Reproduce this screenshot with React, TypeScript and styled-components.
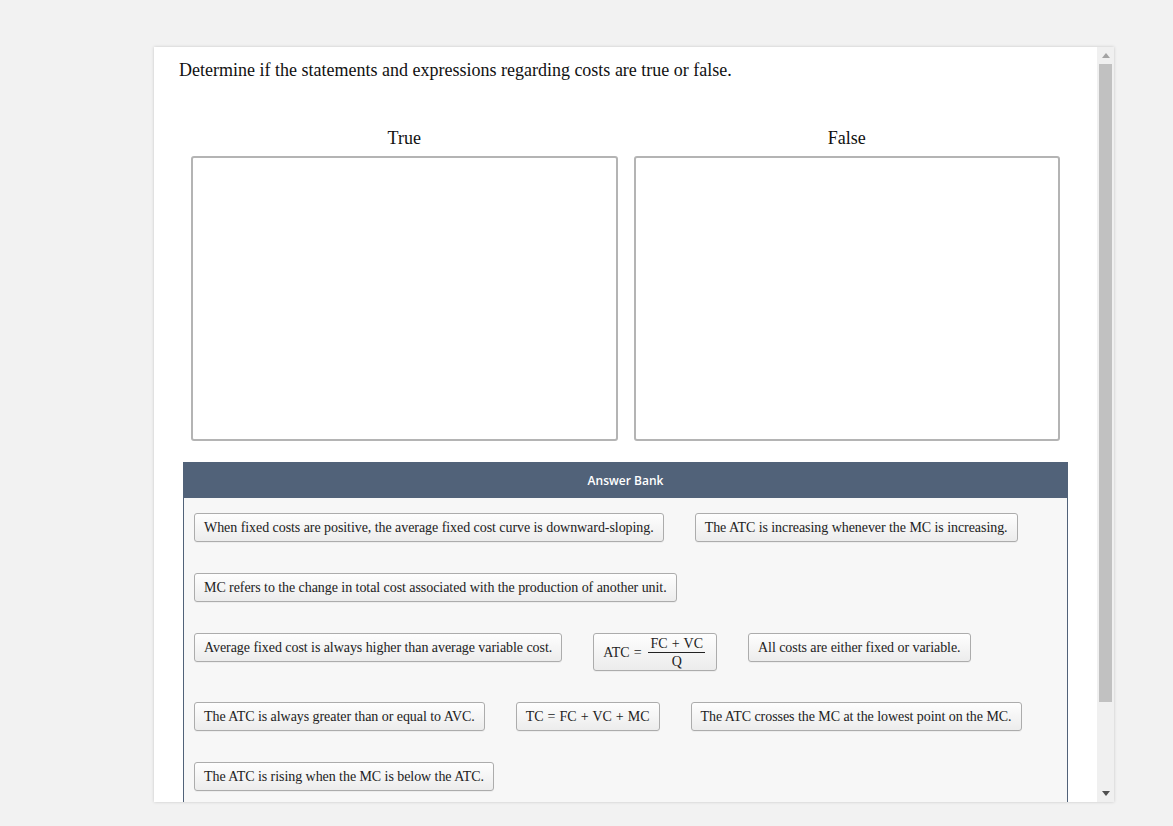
import React from "react";
import styled, { createGlobalStyle } from "styled-components";

const Global = createGlobalStyle`
  html, body { margin: 0; padding: 0; background: #f2f2f2; }
  body { font-family: "Liberation Serif", "Times New Roman", serif; color: #222; }
`;

const Page = styled.div`
  width: 1173px;
  height: 826px;
  padding: 47px 0 0 154px;
  box-sizing: border-box;
  overflow: hidden;
`;

const Card = styled.div`
  width: 960px;
  height: 755px;
  background: #fff;
  box-shadow: 0 0 3px rgba(0, 0, 0, 0.18);
  display: flex;
  overflow: hidden;
`;

const Content = styled.div`
  flex: 1;
  overflow: hidden;
  padding: 12px 0 0 25px;
  box-sizing: border-box;
`;

const Title = styled.div`
  font-size: 18px;
  line-height: 22px;
  color: #111;
`;

const Columns = styled.div`
  display: flex;
  margin: 47px 0 0 4px;
  width: 885px;
`;

const Column = styled.div`
  flex: 1;
  display: flex;
  flex-direction: column;
  align-items: center;
  padding: 0 8px;
`;

const ColLabel = styled.div`
  font-size: 18px;
  line-height: 20px;
  color: #111;
  margin-bottom: 8px;
`;

const DropBox = styled.div`
  width: 100%;
  height: 285px;
  border: 2px solid #b4b4b4;
  border-radius: 3px;
  box-sizing: border-box;
`;

const Bank = styled.div`
  width: 885px;
  margin: 21px 0 0 4px;
  border-left: 1px solid #516279;
  border-right: 1px solid #516279;
  box-sizing: border-box;
  background: #f7f7f7;
  height: 400px;
`;

const BankHeader = styled.div`
  height: 36px;
  background: #516279;
  color: #fff;
  font-family: "Open Sans", sans-serif;
  font-size: 12px;
  font-weight: 600;
  display: flex;
  align-items: center;
  justify-content: center;
  margin: 0 -1px;
`;

const ChipArea = styled.div`
  display: flex;
  flex-wrap: wrap;
  align-items: flex-start;
  column-gap: 31px;
  row-gap: 31px;
  padding: 15px 10px;
`;

const Chip = styled.div`
  display: block;
  border: 1px solid #acacac;
  border-radius: 3px;
  background: linear-gradient(#fefefe, #ececec);
  font-size: 14px;
  line-height: 17px;
  letter-spacing: -0.06px;
  padding: 5px 9px;
  color: #222;
  white-space: nowrap;
  box-shadow: 0 1px 0 rgba(0, 0, 0, 0.04);
`;

const FracChip = styled(Chip)`
  display: flex;
  align-items: center;
  padding: 3px 11px 2px 9px;
  letter-spacing: 0;
`;

const Op = styled.span`
  margin: 0 0.7px;
`;

const Frac = styled.span`
  display: inline-flex;
  flex-direction: column;
  align-items: center;
  margin-left: 6px;
  line-height: 13px;
`;

const Num = styled.span`
  padding: 0 2px 2px;
  border-bottom: 1px solid #222;
`;

const Den = styled.span`
  padding-top: 2px;
`;

const Scrollbar = styled.div`
  width: 17px;
  background: #f0f0f0;
  display: flex;
  flex-direction: column;
  align-items: center;
`;

const Arrow = styled.div`
  height: 17px;
  width: 17px;
  display: flex;
  align-items: center;
  justify-content: center;
`;

const Thumb = styled.div`
  width: 13px;
  height: 638px;
  background: #c1c1c1;
`;

const Track = styled.div`
  flex: 1;
`;

const chipsBefore = [
  "When fixed costs are positive, the average fixed cost curve is downward-sloping.",
  "The ATC is increasing whenever the MC is increasing.",
  "MC refers to the change in total cost associated with the production of another unit.",
  "Average fixed cost is always higher than average variable cost.",
];

const chipsAfter = [
  "All costs are either fixed or variable.",
  "The ATC is always greater than or equal to AVC.",
];

const chipsEnd = [
  "The ATC crosses the MC at the lowest point on the MC.",
  "The ATC is rising when the MC is below the ATC.",
];

export default function App() {
  return (
    <Page>
      <Global />
      <Card>
        <Content>
          <Title>Determine if the statements and expressions regarding costs are true or false.</Title>
          <Columns>
            <Column>
              <ColLabel>True</ColLabel>
              <DropBox />
            </Column>
            <Column>
              <ColLabel>False</ColLabel>
              <DropBox />
            </Column>
          </Columns>
          <Bank>
            <BankHeader>Answer Bank</BankHeader>
            <ChipArea>
              {chipsBefore.map((c) => (
                <Chip key={c}>{c}</Chip>
              ))}
              <FracChip>
                <span>
                  ATC <Op>=</Op>
                </span>
                <Frac>
                  <Num>
                    FC <Op>+</Op> VC
                  </Num>
                  <Den>Q</Den>
                </Frac>
              </FracChip>
              {chipsAfter.map((c) => (
                <Chip key={c}>{c}</Chip>
              ))}
              <Chip>
                TC <Op>=</Op> FC <Op>+</Op> VC <Op>+</Op> MC
              </Chip>
              {chipsEnd.map((c) => (
                <Chip key={c}>{c}</Chip>
              ))}
            </ChipArea>
          </Bank>
        </Content>
        <Scrollbar>
          <Arrow>
            <svg width="8" height="5" viewBox="0 0 8 5"><path d="M0 5 L4 0 L8 5 Z" fill="#a3a3a3" /></svg>
          </Arrow>
          <Thumb />
          <Track />
          <Arrow>
            <svg width="8" height="5" viewBox="0 0 8 5"><path d="M0 0 L8 0 L4 5 Z" fill="#505050" /></svg>
          </Arrow>
        </Scrollbar>
      </Card>
    </Page>
  );
}
